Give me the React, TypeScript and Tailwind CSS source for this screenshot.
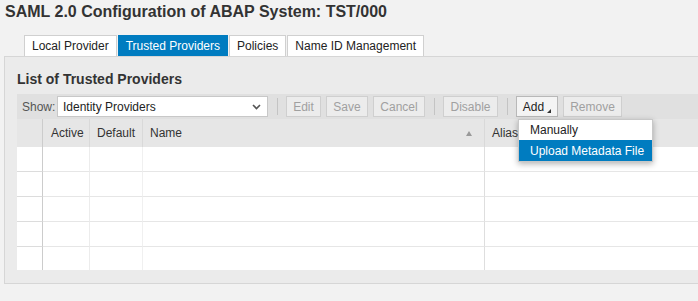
import React from 'react';

const tabs = ['Local Provider', 'Trusted Providers', 'Policies', 'Name ID Management'];

const ToolButton: React.FC<{ label: string; width: string; disabled?: boolean; menu?: boolean; first?: boolean }> = ({
  label,
  width,
  disabled,
  menu,
  first,
}) => (
  <div
    className={`${width} ${first ? '' : 'ml-[5px]'} h-[21px] flex items-center justify-center border text-[12px] ${
      disabled ? 'border-[#cfcfcf] text-[#a0a0a0] bg-[#ececec]' : 'border-[#b8b8b8] text-[#222] bg-[#f4f4f4]'
    }`}
  >
    {label}
    {menu && <span className="ml-[3px] mt-[9px] w-0 h-0 border-l-[4px] border-l-transparent border-b-[4px] border-b-[#333]" />}
  </div>
);

const Sep = () => <div className="w-px h-[17px] bg-[#c4c4c4] ml-[9px] mr-[8px]" />;

const rowHeights = [24, 25, 25, 25, 24];

export default function App() {
  return (
    <div className="relative w-[698px] h-[301px] overflow-hidden bg-[#f2f2f2] text-[#333] font-['Liberation_Sans',Arial,sans-serif]">
      <h1 className="pl-[5px] pt-[2px] h-[35px] text-[16px] font-bold leading-[20px] text-[#333]">
        SAML 2.0 Configuration of ABAP System: TST/000
      </h1>

      <div className="flex pl-[24px] gap-[1px] h-[21px]">
        {tabs.map((t, i) => (
          <div
            key={t}
            className={`px-[7px] flex items-center text-[12px] border border-b-0 ${
              i === 1 ? 'bg-[#007cc0] border-[#007cc0] text-white' : 'bg-white border-[#d0d0d0] text-[#222]'
            }`}
          >
            {t}
          </div>
        ))}
      </div>

      <div className="ml-[4px] h-[228px] bg-[#ebebeb] border border-[#d6d6d6] border-r-0 pl-[12px]">
        <div className="h-[37px] pt-[14px] text-[14px] font-bold leading-[17px] text-[#333]">List of Trusted Providers</div>

        <div className="h-[25px] bg-[#e0e0e0] flex items-center pl-[5px]">
          <span className="text-[12px] text-[#555] w-[35px]">Show:</span>
          <div className="w-[211px] h-[21px] bg-white border border-[#c8c8c8] flex items-center justify-between pl-[5px] pr-[6px] text-[12px] text-[#222]">
            <span>Identity Providers</span>
            <svg width="9" height="6" viewBox="0 0 9 6">
              <path d="M1 1l3.5 3.5L8 1" fill="none" stroke="#555" strokeWidth="1.6" />
            </svg>
          </div>
          <Sep />
          <ToolButton label="Edit" width="w-[35px]" disabled first />
          <ToolButton label="Save" width="w-[42px]" disabled />
          <ToolButton label="Cancel" width="w-[52px]" disabled />
          <Sep />
          <ToolButton label="Disable" width="w-[55px]" disabled first />
          <Sep />
          <ToolButton label="Add" width="w-[42px]" menu first />
          <ToolButton label="Remove" width="w-[59px]" disabled />
        </div>

        <div className="flex h-[28px] bg-[#e6e6e6] text-[12px] text-[#333]">
          <div className="w-[26px] border-r border-[#cccccc]" />
          <div className="w-[47px] border-r border-[#d9d9d9] flex items-center pl-[8px]">Active</div>
          <div className="w-[53px] border-r border-[#d9d9d9] flex items-center pl-[7px]">Default</div>
          <div className="w-[342px] border-r border-[#d9d9d9] flex items-center justify-between pl-[7px] pr-[12px]">
            <span>Name</span>
            <span className="w-0 h-0 border-l-[3px] border-r-[3px] border-l-transparent border-r-transparent border-b-[5px] border-b-[#999]" />
          </div>
          <div className="flex-1 flex items-center pl-[7px]">Alias</div>
        </div>

        {rowHeights.map((h, i) => (
          <div key={i} className="flex bg-white" style={{ height: h }}>
            <div className={`w-[26px] border-r border-[#cccccc] ${i > 0 ? 'border-t border-t-[#dcdcdc]' : ''}`} />
            <div className={`w-[47px] border-r border-[#ececec] ${i > 0 ? 'border-t border-t-[#e6e6e6]' : ''}`} />
            <div className={`w-[53px] border-r border-[#f0f0f0] ${i > 0 ? 'border-t border-t-[#e6e6e6]' : ''}`} />
            <div className={`w-[342px] border-r border-[#dedede] ${i > 0 ? 'border-t border-t-[#e6e6e6]' : ''}`} />
            <div className={`flex-1 ${i > 0 ? 'border-t border-[#e6e6e6]' : ''}`} />
          </div>
        ))}
      </div>

      <div className="absolute left-[518px] top-[119px] w-[135px] bg-white border border-[#c8c8c8] shadow-[0_2px_6px_rgba(0,0,0,0.3)] text-[12px]">
        <div className="h-[20px] flex items-center pl-[11px] text-[#222]">Manually</div>
        <div className="h-[21px] flex items-center pl-[11px] bg-[#007cc0] text-white">Upload Metadata File</div>
      </div>
    </div>
  );
}
